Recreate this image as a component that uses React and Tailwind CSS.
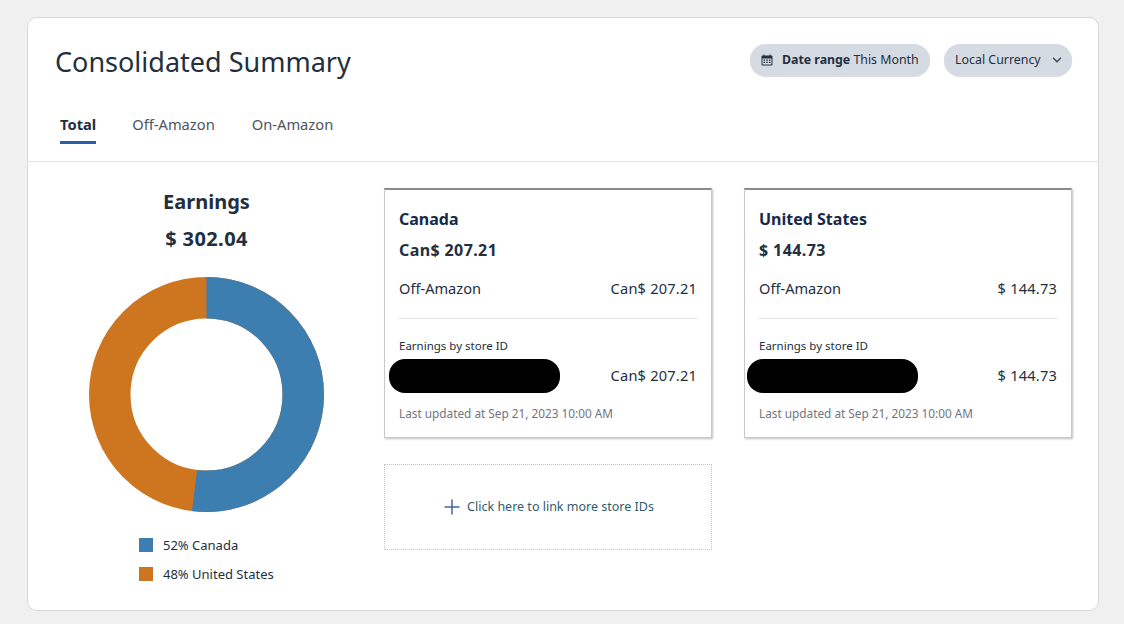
import React from 'react';
import { ChevronDown } from 'lucide-react';

const font = { fontFamily: '"Noto Sans", sans-serif' };

const CalendarIcon = () => (
  <svg width="12" height="12" viewBox="0 0 12 12" className="text-[#232f3e]">
    <path fill="currentColor" d="M2.5 0.5h1v1h5v-1h1v1h1a1 1 0 0 1 1 1v8a1 1 0 0 1-1 1h-9a1 1 0 0 1-1-1v-8a1 1 0 0 1 1-1h1z" />
    <path fill="#d5dbe3" d="M1.5 4.5h9v6h-9z" />
    <path fill="currentColor" d="M2.5 5.5h1.6v1.2h-1.6zM5.2 5.5h1.6v1.2h-1.6zM7.9 5.5h1.6v1.2h-1.6zM2.5 7.8h1.6v1.2h-1.6zM5.2 7.8h1.6v1.2h-1.6zM7.9 7.8h1.6v1.2h-1.6z" />
  </svg>
);

const StoreCard = ({ country, amount, blobOffset }) => (
  <div className="w-[328px] h-[250px] bg-white border-x border-b border-[#c9c9c9] border-t-2 border-t-[#8b8b8b] shadow-[1px_1px_2px_rgba(0,0,0,0.25)] px-[14px] pt-[18px]">
    <div className="text-[16px] leading-[22px] font-bold text-[#16294a]">{country}</div>
    <div className="mt-[9px] text-[16px] leading-[22px] font-bold tracking-[0.4px] text-[#232f3e]">{amount}</div>
    <div className="mt-[17px] flex justify-between text-[14.6px] leading-[20px] text-[#232f3e]">
      <span>Off-Amazon</span>
      <span className="tracking-[0.2px]">{amount}</span>
    </div>
    <div className="mt-[20px] h-px bg-[#e3e3e3]" />
    <div className="mt-[19px] text-[11.5px] leading-[15px] text-[#232f3e]">Earnings by store ID</div>
    <div className="mt-[6px] flex justify-between items-center h-[34px] text-[14.6px] leading-[20px] text-[#232f3e]">
      <div className={`h-[34px] w-[171px] rounded-[16px] bg-black ${blobOffset}`} />
      <span className="tracking-[0.2px] -mt-[3px]">{amount}</span>
    </div>
    <div className="mt-[13px] text-[11.8px] leading-[15px] text-[#6f7681]">Last updated at Sep 21, 2023 10:00 AM</div>
  </div>
);

export default function App() {
  return (
    <div style={font} className="h-[624px] w-[1124px] bg-[#f0f0f0] pt-[17px] pl-[27px] overflow-hidden">
      <div className="w-[1072px] h-[594px] bg-white border border-[#d9d9d9] rounded-[10px]">
        <div className="flex justify-between pl-[27px] pr-[26px] pt-[26px]">
          <h1 className="text-[27px] leading-[36px] text-[#232f3e]">Consolidated Summary</h1>
          <div className="flex gap-[14px] h-[32px]">
            <div className="flex items-center gap-[9px] h-[32px] w-[180px] pl-[11px] rounded-full bg-[#d5dbe3] shadow-[0_1px_1px_rgba(0,0,0,0.15)] text-[12.35px] text-[#232f3e]">
              <CalendarIcon />
              <span><b className="font-bold">Date range</b> This Month</span>
            </div>
            <div className="flex items-center justify-between h-[32px] w-[128px] pl-[11px] pr-[8px] rounded-full bg-[#d5dbe3] shadow-[0_1px_1px_rgba(0,0,0,0.15)] text-[12.4px] text-[#232f3e]">
              <span>Local Currency</span>
              <ChevronDown size={14} strokeWidth={3} className="text-[#4d5560]" />
            </div>
          </div>
        </div>

        <div className="flex px-[32px] mt-[27px] h-[55px] border-b border-[#e3e3e3] text-[14.7px] leading-[20px]">
          <div className="font-bold text-[#232f3e] h-[37px] pt-[7px] border-b-[3px] border-[#2a5ea8]">Total</div>
          <div className="ml-[36px] text-[#4d5560] pt-[7px]">Off-Amazon</div>
          <div className="ml-[37px] text-[#4d5560] pt-[7px]">On-Amazon</div>
        </div>

        <div className="flex gap-[26px] pl-[27px] pt-[26px]">
          <div className="w-[303px] pt-px flex flex-col items-center">
            <div className="text-[20px] leading-[26px] font-bold text-[#232f3e]">Earnings</div>
            <div className="mt-[11px] text-[20px] leading-[26px] font-bold tracking-[0.4px] text-[#232f3e]">$ 302.04</div>
            <svg width="238" height="238" viewBox="0 0 238 238" className="mt-[23px]">
              <circle cx="118.5" cy="119.5" r="96.75" fill="none" stroke="#ce761f" strokeWidth="41.5" />
              <circle cx="118.5" cy="119.5" r="96.75" fill="none" stroke="#3c7eb0" strokeWidth="41.5" pathLength="100" strokeDasharray="52 48" transform="rotate(-90 118.5 119.5)" />
            </svg>
            <div className="mt-[24px] w-[135px] self-center text-[13px] leading-[16px] text-[#232f3e] flex flex-col gap-[13px]">
              <div className="flex items-center gap-[10px] whitespace-nowrap"><span className="w-[14px] h-[14px] bg-[#3c7eb0]" />52% Canada</div>
              <div className="flex items-center gap-[10px] whitespace-nowrap"><span className="w-[14px] h-[14px] bg-[#ce761f]" />48% United States</div>
            </div>
          </div>

          <div className="flex flex-col">
            <div className="flex gap-[32px]">
              <StoreCard country="Canada" amount="Can$ 207.21" blobOffset="-ml-[10px]" />
              <StoreCard country="United States" amount="$ 144.73" blobOffset="-ml-[12px]" />
            </div>
            <div className="mt-[26px] w-[328px] h-[86px] pl-[2px] border border-dotted border-[#c5c5c5] flex items-center justify-center gap-[7px] text-[12.5px] text-[#2f5d6e]">
              <svg width="16" height="16" viewBox="0 0 16 16"><path d="M8 0.5v15M0.5 8h15" stroke="#44659c" strokeWidth="1.5" fill="none" /></svg>
              <span>Click here to link more store IDs</span>
            </div>
          </div>
        </div>
      </div>
    </div>
  );
}
